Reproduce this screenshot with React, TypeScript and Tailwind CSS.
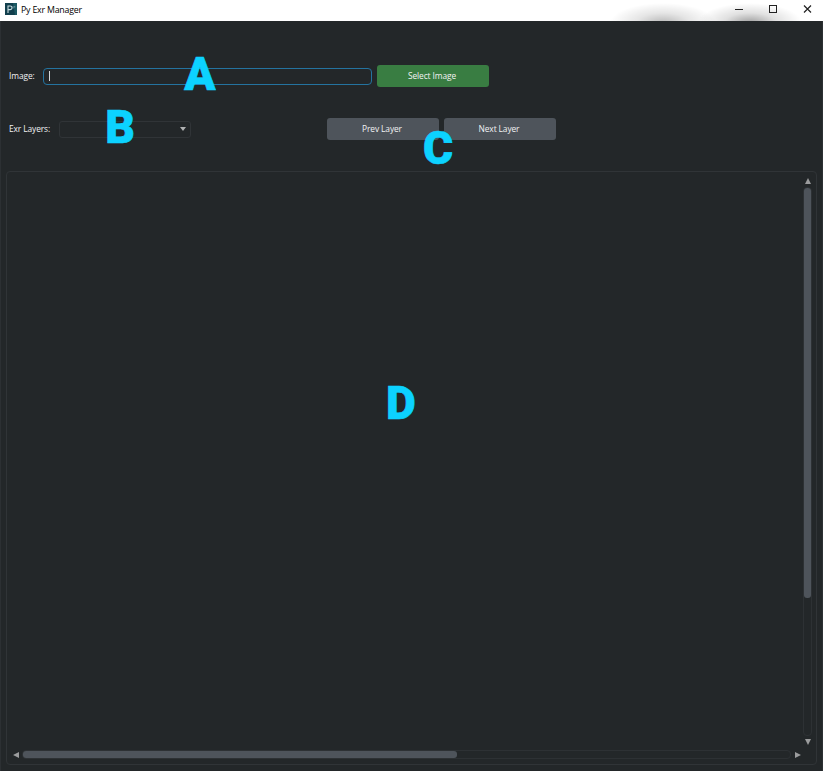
import type { ReactNode } from "react";

function Marker({ className, children }: { className: string; children: ReactNode }) {
  return (
    <span
      className={`pointer-events-none absolute text-center font-[Roboto] text-[46px] leading-[46px] font-black text-[#0cd2ff] [-webkit-text-stroke:0.6px_#0cd2ff] ${className}`}
    >
      {children}
    </span>
  );
}

function TitleBar() {
  return (
    <header className="relative flex h-[21px] items-start overflow-hidden bg-white text-black">
      <div className="absolute top-[3px] left-[610px] h-[40px] w-[106px] bg-[radial-gradient(closest-side,rgba(0,0,0,0.28),rgba(0,0,0,0.1)_50%,transparent)]" />
      <div className="absolute top-[3px] left-[698px] h-[40px] w-[104px] bg-[radial-gradient(closest-side,rgba(0,0,0,0.38),rgba(0,0,0,0.12)_50%,transparent)]" />
      <svg className="relative mt-[3px] ml-[5px] shrink-0" width="12" height="12" viewBox="0 0 12 12">
        <rect width="12" height="12" fill="#123f4d" />
        <path d="M8 0h4v12h-2z" fill="#1c5963" />
        <path d="M3 10V3h2.2a1.7 1.7 0 0 1 0 3.6H3" fill="none" stroke="#c9dde0" strokeWidth="1.1" />
        <path d="M8 3.2v2.3M9.7 3.2v1.3" stroke="#91b5bb" strokeWidth="0.8" />
      </svg>
      <h1 className="relative ml-[4px] pt-[4px] text-[8.8px] leading-[12px] font-normal tracking-[-0.2px] whitespace-nowrap">
        Py Exr Manager
      </h1>
      <svg className="relative mt-[4px] mr-[11px] ml-auto shrink-0" width="77" height="10" viewBox="0 0 77 10" fill="none" stroke="#222">
        <path d="M0 5.5h8" />
        <rect x="34.5" y="1.5" width="7" height="7" />
        <path d="M69 1.5l7 7M76 1.5l-7 7" strokeWidth="1.2" />
      </svg>
    </header>
  );
}

function Button({ className, children }: { className: string; children: ReactNode }) {
  return (
    <button className={`h-[22px] w-[112px] rounded-[3px] pr-[2px] text-center text-[8.4px] leading-[20px] tracking-[-0.1px] text-[#f1f2f3] ${className}`}>
      {children}
    </button>
  );
}

export default function App() {
  return (
    <div
      className="relative flex h-[771px] w-[823px] flex-col overflow-hidden bg-[#232729]"
      style={{ fontFamily: '"Open Sans", "Noto Sans", sans-serif' }}
    >
      <TitleBar />
      <main className="flex min-h-0 flex-1 flex-col border-x border-[#2c3033] px-[5px] pb-[6px]">
        <section className="mt-[44px] flex h-[22px] items-center">
          <label className="w-[37px] pl-[3px] text-[8.4px] leading-[12px] tracking-[-0.1px] whitespace-nowrap text-[#f1f2f3]">Image:</label>
          <div className="flex h-[17px] w-[329px] items-center rounded-[4px] border border-[#24739f] pl-[5px]">
            <span className="h-[10px] w-px bg-[#d5d8da]" />
          </div>
          <Button className="ml-[5px] bg-[#397d42]">Select Image</Button>
        </section>
        <section className="mt-[31px] flex h-[22px] items-center">
          <label className="w-[53px] pl-[3px] text-[8.4px] leading-[12px] tracking-[-0.1px] whitespace-nowrap text-[#f1f2f3]">Exr Layers:</label>
          <div className="flex h-[17px] w-[132px] items-center justify-end rounded-[3px] border border-[#303437] pr-[4px]">
            <svg width="6" height="4" viewBox="0 0 6 4"><path d="M0 0h6L3 4z" fill="#b0b2b3" /></svg>
          </div>
          <Button className="ml-[136px] bg-[#4e545b]">Prev Layer</Button>
          <Button className="ml-[5px] bg-[#4e545b]">Next Layer</Button>
        </section>
        <section className="mt-[31px] flex min-h-0 flex-1 flex-col rounded-[4px] border border-[#303437]">
          <div className="flex min-h-0 flex-1">
            <div className="flex-1" />
            <div className="mr-[4px] flex w-[9px] flex-col items-center pt-[6px] pb-[18px]">
              <svg className="shrink-0" width="6" height="6" viewBox="0 0 6 6"><path d="M3 0l3 6H0z" fill="#9b9c9d" /></svg>
              <div className="mt-[3px] h-[549px] w-[9px] shrink-0 rounded-[4px] border border-[#2d3134]">
                <div className="h-[410px] w-[7px] rounded-[3px] bg-[#4e545b]" />
              </div>
              <svg className="mt-[3px] shrink-0" width="6" height="6" viewBox="0 0 6 6"><path d="M0 0h6L3 6z" fill="#9b9c9d" /></svg>
            </div>
          </div>
          <div className="mb-[5px] flex h-[9px] shrink-0 items-center pl-[6px]">
            <svg width="6" height="6" viewBox="0 0 6 6"><path d="M6 0v6L0 3z" fill="#9b9c9d" /></svg>
            <div className="ml-[3px] h-[9px] w-[769px] rounded-[4px] border border-[#2d3134]">
              <div className="h-[7px] w-[434px] rounded-[3px] bg-[#4e545b]" />
            </div>
            <svg className="ml-[4px]" width="6" height="6" viewBox="0 0 6 6"><path d="M0 0l6 3-6 3z" fill="#9b9c9d" /></svg>
          </div>
        </section>
      </main>
      <Marker className="top-[51px] left-[180px] w-[40px]">A</Marker>
      <Marker className="top-[104px] left-[100px] w-[40px]">B</Marker>
      <Marker className="top-[125px] left-[418px] w-[40px]">C</Marker>
      <Marker className="top-[380px] left-[381px] w-[40px]">D</Marker>
    </div>
  );
}
